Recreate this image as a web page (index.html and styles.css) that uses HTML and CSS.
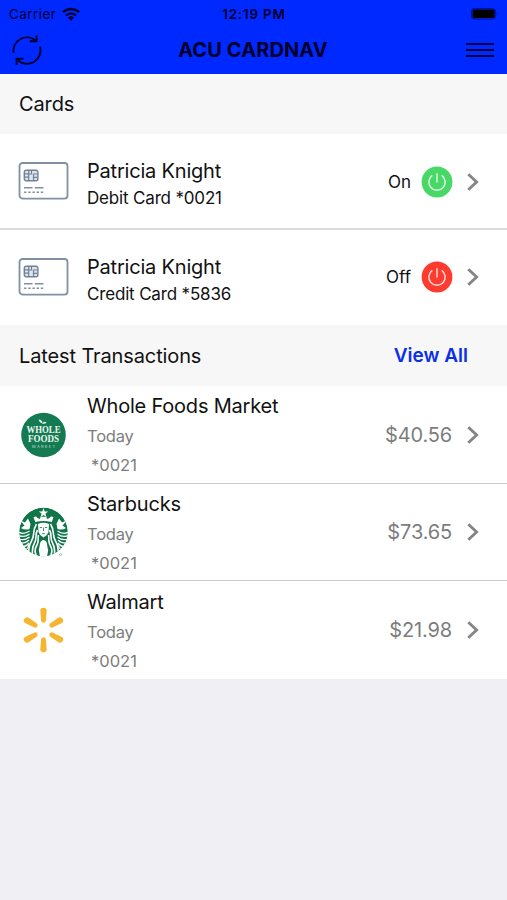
FILE: index.html
```
<!DOCTYPE html>
<html lang="en">
<head>
    <meta charset="UTF-8">
    <meta name="viewport" content="width=device-width, initial-scale=1.0">
    <title>ACU CardNav</title>
    <link rel="stylesheet" href="styles.css">
</head>
<body>
<!-- Shared icons -->
<svg class="sprite" width="0" height="0">
    <symbol id="chevron" viewBox="0 0 12 18">
        <path d="M1.3 1.3 9.6 9 1.3 16.7" fill="none" stroke="#858585" stroke-width="2.9"/>
    </symbol>
    <symbol id="power" viewBox="0 0 32 32">
        <circle cx="16" cy="16" r="15.4" fill="currentColor"/>
        <path d="M11.3 9.4A8.2 8.2 0 1 0 20.7 9.4M16 7.3V16.6" fill="none" stroke="#fff" stroke-opacity=".85" stroke-width="1.4"/>
    </symbol>
    <symbol id="card" viewBox="0 0 50 38">
        <rect x="1" y="1" width="48" height="35.6" rx="3" fill="#fff" stroke="#8090a3" stroke-width="1.8"/>
        <rect x="5.8" y="8.2" width="13.6" height="10.6" rx="2" fill="#dfe5eb" stroke="#708295" stroke-width="1.4"/>
        <path d="M6 11.8h4.2M6 15.2h4.2M10.2 8.4v10.2M15 18.6V12h4.2M15 15.4h4.2M10.2 12H13V8.4" fill="none" stroke="#708295" stroke-width="1.2"/>
        <path d="M5.5 25.8H14M16.2 25.8H25" stroke="#8190a2" stroke-width="1.6"/>
        <path d="M5.5 30.2H25" stroke="#8190a2" stroke-width="1.5" stroke-dasharray="2.4 1.8"/>
    </symbol>
</svg>

<header class="top">
    <div class="status-bar">
        <div class="carrier">
            <span>Carrier</span>
            <svg width="18" height="14" viewBox="0 0 18 14">
                <path d="M1 5.2A11.6 11.6 0 0 1 17 5.2" fill="none" stroke="#00002a" stroke-width="2.4"/>
                <path d="M4 8.5A7.2 7.2 0 0 1 14 8.5" fill="none" stroke="#00002a" stroke-width="2.1"/>
                <path d="M9 13.8 6 10.8A4.3 4.3 0 0 1 12 10.8Z" fill="#00002a"/>
            </svg>
        </div>
        <div class="clock">12:19 PM</div>
        <svg class="battery" width="28" height="12" viewBox="0 0 28 12">
            <rect x=".5" y=".5" width="24" height="10.5" rx="2.6" fill="none" stroke="#001296"/>
            <rect x="1.5" y="1.5" width="22" height="8.5" rx="1.2" fill="#000"/>
            <path d="M26.2 4v3.6" stroke="#0018c0" stroke-width="1"/>
        </svg>
    </div>
    <div class="nav-bar">
        <svg class="refresh" width="30" height="32" viewBox="0 0 30 32">
            <path d="M1.6 19A13.5 13.5 0 0 1 23.3 6.3M28 12.5A13.5 13.5 0 0 1 5.9 26.2" fill="none" stroke="#00002a" stroke-width="1.9"/>
            <path d="M24.6 1.2V7.3H17.8M4.6 31V24.8H11.4" fill="none" stroke="#00002a" stroke-width="1.9"/>
        </svg>
        <h1>ACU CARDNAV</h1>
        <svg class="menu" width="28" height="16" viewBox="0 0 28 16">
            <path d="M0 2H28M0 8H28M0 14H28" stroke="#00003c" stroke-width="2"/>
        </svg>
    </div>
</header>

<div class="section-header">
    <h2>Cards</h2>
</div>
<div class="card-row">
    <svg class="card-icon"><use href="#card"/></svg>
    <div class="info">
        <div class="name">Patricia Knight</div>
        <div class="detail">Debit Card *0021</div>
    </div>
    <span class="state">On</span>
    <svg class="power on"><use href="#power"/></svg>
    <svg class="chevron"><use href="#chevron"/></svg>
</div>
<div class="card-row">
    <svg class="card-icon"><use href="#card"/></svg>
    <div class="info">
        <div class="name">Patricia Knight</div>
        <div class="detail">Credit Card *5836</div>
    </div>
    <span class="state">Off</span>
    <svg class="power off"><use href="#power"/></svg>
    <svg class="chevron"><use href="#chevron"/></svg>
</div>

<div class="section-header latest">
    <h2>Latest Transactions</h2>
    <a class="view-all">View All</a>
</div>
<div class="transaction">
    <svg class="logo" viewBox="0 0 50 50">
        <circle cx="25" cy="25" r="22.3" fill="#137a52"/>
        <path d="M24 13.5C21 12.5 20.3 10.5 20.2 9.4C22.5 9.5 24 11 24.2 13C25.5 11.2 27 11.5 28 12.5C27 13.7 25.5 14.2 24 13.5Z" fill="#e2f0e8"/>
        <text class="wf-name" x="25" y="22.6" textLength="34" lengthAdjust="spacingAndGlyphs">WHOLE</text>
        <text class="wf-name" x="25" y="31.6" textLength="31" lengthAdjust="spacingAndGlyphs">FOODS</text>
        <text class="wf-market" x="25" y="37.8" textLength="23">MARKET</text>
    </svg>
    <div class="info">
        <div class="name">Whole Foods Market</div>
        <div class="date">Today</div>
        <div class="number">*0021</div>
    </div>
    <span class="amount">$40.56</span>
    <svg class="chevron"><use href="#chevron"/></svg>
</div>
<div class="transaction short">
    <svg class="logo" viewBox="0 0 50 50">
        <defs>
            <clipPath id="seal"><circle cx="25" cy="25" r="24.4"/></clipPath>
        </defs>
        <g clip-path="url(#seal)">
            <circle cx="25" cy="25" r="24.4" fill="#11754a"/>
            <!-- tails -->
            <g fill="none" stroke="#fff" stroke-width="1.3">
                <path d="M0 25Q5 28 11 24M0 28.5Q6 31 11 27M0 32Q6 34 11 30M1 36Q7 36.5 10.5 33M3 40Q8 39.5 10.5 36M6 44Q10 41 10.5 38"/>
                <path d="M50 25Q45 28 39 24M50 28.5Q44 31 39 27M50 32Q44 34 39 30M49 36Q43 36.5 39.5 33M47 40Q42 39.5 39.5 36M44 44Q40 41 39.5 38"/>
            </g>
            <path d="M1 13 6.5 15.5 9.5 11.5 12 17 11 22Q6 23.5 2.5 21L6 18.5ZM49 13 43.5 15.5 40.5 11.5 38 17 39 22Q44 23.5 47.5 21L44 18.5Z" fill="#fff"/>
            <!-- hair -->
            <g fill="none" stroke="#fff" stroke-width="1.6">
                <path d="M18 17C13 25 17 28 13 34S11 42 10 47M19 23C16 28 19 31 16 36S14 43 14 49M20 28C19 32 21 34 18 39S17 45 18 50"/>
                <path d="M32 17C37 25 33 28 37 34S39 42 40 47M31 23C34 28 31 31 34 36S36 43 36 49M30 28C31 32 29 34 32 39S33 45 32 50"/>
            </g>
            <path d="M25 33C20.5 33.5 21.8 39 20.3 43L21.5 50H28.5L29.7 43C28.2 39 29.5 33.5 25 33Z" fill="#fff"/>
            <!-- face and crown -->
            <path d="M19.5 17Q25 14.5 30.5 17L30 25Q28.5 29 25 30.5Q21.5 29 20 25Z" fill="#fff"/>
            <path d="M21.3 20.5h2.3M26.4 20.5h2.3M25 20.5v3.7M23.5 26.6h3" stroke="#11754a" stroke-width=".8"/>
            <path d="M16.8 15 15 10.5Q17 8.5 19 11L21.5 12 22 9.8H28L28.5 12 31 11Q33 8.5 35 10.5L33.2 15Q25 12.8 16.8 15Z" fill="#fff"/>
            <path d="M25 1 26.2 4.4 29.8 4.4 26.9 6.5 28 10 25 7.9 22 10 23.1 6.5 20.2 4.4 23.8 4.4Z" fill="#fff"/>
        </g>
        <circle cx="42" cy="47.6" r="1.1" fill="none" stroke="#6a9d83" stroke-width=".6"/>
    </svg>
    <div class="info">
        <div class="name">Starbucks</div>
        <div class="date">Today</div>
        <div class="number">*0021</div>
    </div>
    <span class="amount">$73.65</span>
    <svg class="chevron"><use href="#chevron"/></svg>
</div>
<div class="transaction">
    <svg class="logo" viewBox="0 0 50 50">
        <defs>
            <path id="ray" d="M21.8 5.6Q22 2.8 25 2.8T28.2 5.6L27.4 16Q27 17.8 25 17.8T22.6 16Z" fill="#f6b530"/>
        </defs>
        <use href="#ray"/>
        <use href="#ray" transform="rotate(60 25 25)"/>
        <use href="#ray" transform="rotate(120 25 25)"/>
        <use href="#ray" transform="rotate(180 25 25)"/>
        <use href="#ray" transform="rotate(240 25 25)"/>
        <use href="#ray" transform="rotate(300 25 25)"/>
    </svg>
    <div class="info">
        <div class="name">Walmart</div>
        <div class="date">Today</div>
        <div class="number">*0021</div>
    </div>
    <span class="amount">$21.98</span>
    <svg class="chevron"><use href="#chevron"/></svg>
</div>
</body>
</html>
```
FILE: styles.css
```
* {
    box-sizing: border-box;
}

body {
    font-family: Inter, "Liberation Sans", sans-serif;
    background-color: #efeff4;
    color: #111;
    margin: 0;
    padding: 0;
}

svg {
    display: block;
    flex-shrink: 0;
}

.sprite {
    display: none;
}

/* Top bar */
.top {
    height: 74px;
    background-color: #0029ff;
    color: #00002a;
}

.status-bar {
    display: grid;
    grid-template-columns: 1fr auto 1fr;
    align-items: center;
    height: 27px;
    padding: 0 8px 0 9px;
}

.carrier {
    display: flex;
    align-items: center;
    gap: 6px;
    font-size: 13.5px;
    letter-spacing: 0.45px;
}

.clock {
    font-size: 13.5px;
    font-weight: 600;
    letter-spacing: 0.8px;
}

.battery {
    justify-self: end;
}

.nav-bar {
    display: grid;
    grid-template-columns: 1fr auto 1fr;
    align-items: center;
    height: 46px;
    padding: 0 13px 0 12px;
}

.nav-bar h1 {
    margin: 0;
    font-size: 20px;
    font-weight: 700;
    letter-spacing: 0.1px;
}

.menu {
    justify-self: end;
}

/* Section headings */
.section-header {
    display: flex;
    align-items: center;
    justify-content: space-between;
    height: 60px;
    padding: 0 39px 0 19px;
    background-color: #f7f7f7;
}

.section-header.latest {
    height: 61px;
}

.section-header h2 {
    margin: 0;
    font-size: 20px;
    font-weight: 400;
    letter-spacing: -0.12px;
}

.view-all {
    color: #0c2fe8;
    font-size: 19px;
    font-weight: 600;
}

/* Card and transaction rows */
.card-row,
.transaction {
    display: flex;
    align-items: center;
    padding: 0 28px 0 18px;
    background-color: #fff;
}

.card-row {
    height: 96px;
    padding-top: 1px;
    border-bottom: 2px solid #d9dcde;
}

.card-row + .card-row {
    height: 95px;
    padding-top: 0;
    padding-bottom: 1px;
    border-bottom: none;
}

.card-row .info {
    padding-top: 6px;
}

.transaction {
    height: 98px;
    border-bottom: 1px solid #c9cdcf;
}

.transaction.short {
    height: 97px;
}

.transaction:last-child {
    border-bottom: none;
}

.transaction .info {
    padding-top: 2px;
}

.card-icon {
    width: 51px;
    height: 38px;
    margin-bottom: 1px;
}

.logo {
    width: 51px;
    height: 50px;
}

.info {
    flex: 1;
    margin-left: 18px;
}

.name {
    font-size: 20px;
    line-height: 28px;
    letter-spacing: -0.2px;
}

.detail {
    font-size: 17px;
    line-height: 27px;
    letter-spacing: -0.17px;
}

.state {
    margin-right: 10px;
    font-size: 17px;
}

.power {
    width: 32px;
    height: 32px;
    margin-right: 14px;
}

.on {
    color: #48d865;
}

.off {
    color: #ff3b30;
}

.chevron {
    width: 12px;
    height: 18px;
}

.date,
.number {
    color: #7d7d7d;
    font-size: 16.5px;
    line-height: 29px;
    letter-spacing: -0.2px;
}

.number {
    padding-left: 4px;
    letter-spacing: 0;
}

.transaction .name {
    line-height: 31px;
}

.amount {
    margin-right: 15px;
    color: #7d7d7d;
    font-size: 20px;
    letter-spacing: -0.15px;
}

/* Store logo lettering */
.wf-name {
    fill: #f1f8f3;
    font-family: "Liberation Serif", serif;
    font-size: 9.5px;
    font-weight: bold;
    text-anchor: middle;
}

.wf-market {
    fill: #c5dfd1;
    font-family: Inter, sans-serif;
    font-size: 4px;
    text-anchor: middle;
}
```
